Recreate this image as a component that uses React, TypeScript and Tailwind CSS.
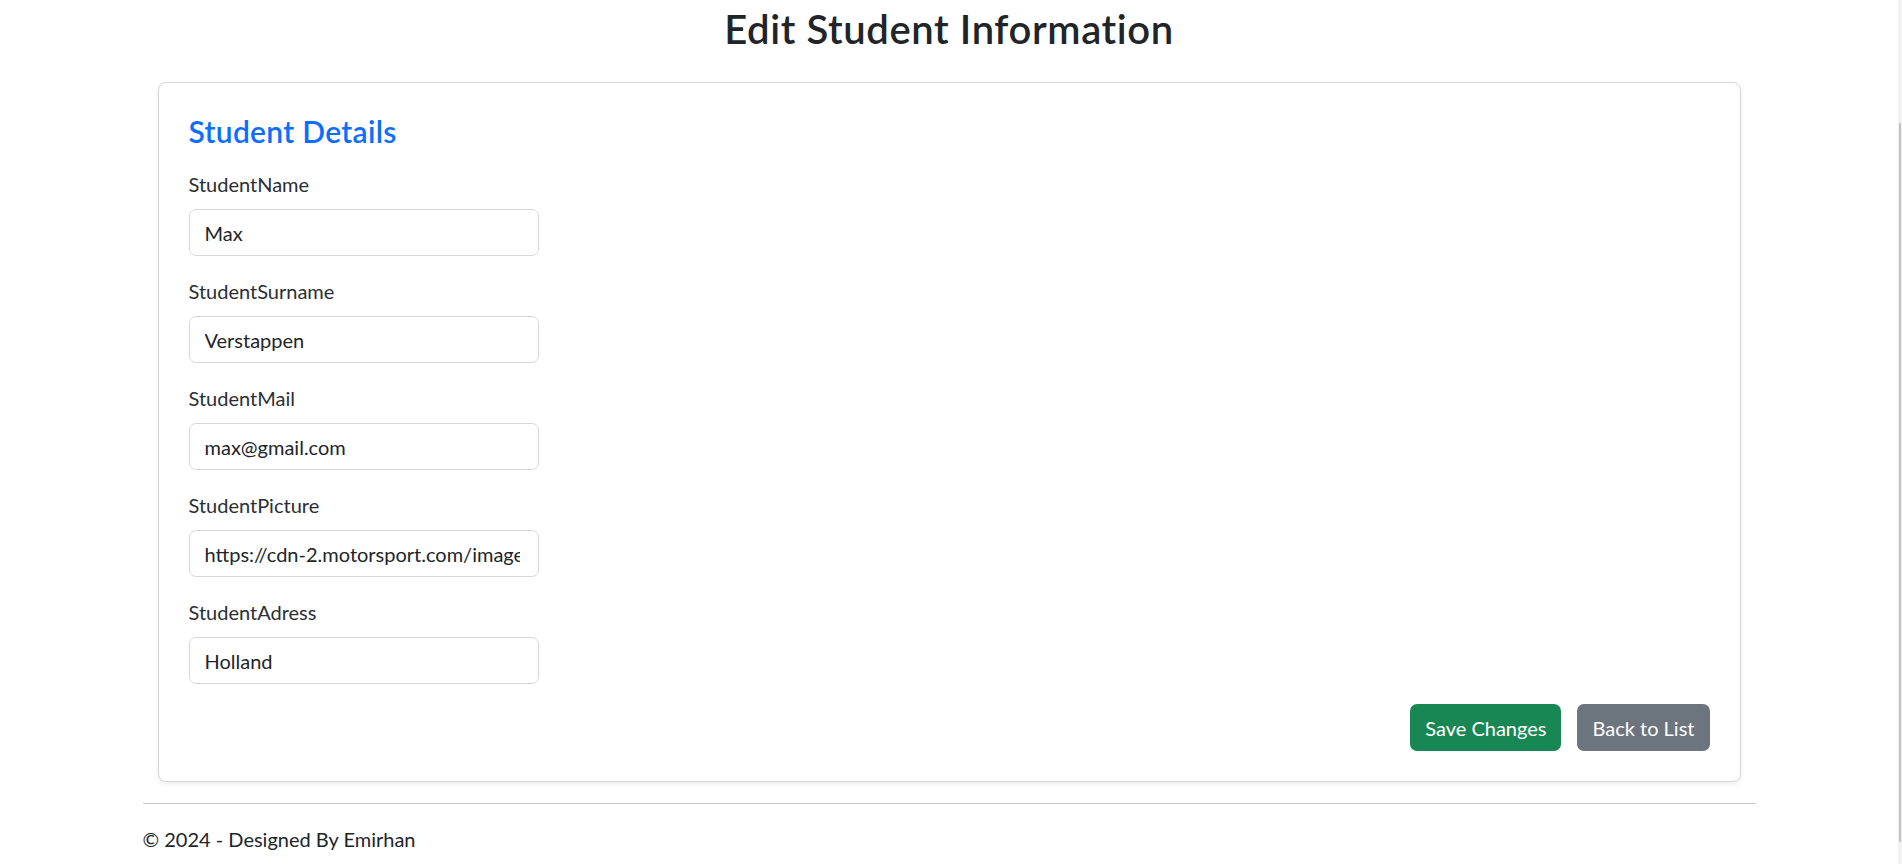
import React from "react";

const fields = [
  { label: "StudentName", value: "Max" },
  { label: "StudentSurname", value: "Verstappen" },
  { label: "StudentMail", value: "max@gmail.com" },
  { label: "StudentPicture", value: "https://cdn-2.motorsport.com/images/amp/2jXZBOm6/s1000/max-verstappen-red-bull-racing.jpg" },
  { label: "StudentAdress", value: "Holland" },
];

export default function App() {
  return (
    <div
      className="flex min-h-screen bg-white text-[#212529]"
      style={{ fontFamily: '"Segoe UI", Lato, "Noto Sans", sans-serif' }}
    >
      <div className="flex-1">
        <div className="w-[1613px] mx-auto">
          <h1 className="text-center text-[40px] leading-[48px] font-semibold tracking-[0.6px] pt-[5px] mb-[29px]">
            Edit Student Information
          </h1>
          <div className="px-[15px]">
            <div className="border border-[#d6d6d6] rounded-[8px] shadow-[0_2px_5px_rgba(0,0,0,0.08)] p-[30px] bg-white">
              <h4 className="text-[30px] leading-[36px] font-semibold tracking-[0.3px] text-[#0d6efd] mb-[20px]">
                Student Details
              </h4>
              {fields.map((f) => (
                <div key={f.label} className="mb-[20px]">
                  <label className="block text-[20px] leading-[30px] mb-[10px] text-[#2b2f33]">{f.label}</label>
                  <input
                    readOnly
                    value={f.value}
                    className="block w-[350px] h-[47px] pl-[15px] pr-[18px] text-[20px] text-[#212529] border border-[#d6d8db] rounded-[7px] bg-white outline-none"
                    style={{ fontFamily: '"Segoe UI", Lato, "Noto Sans", sans-serif' }}
                  />
                </div>
              ))}
              <div className="flex justify-end gap-[16px]">
                <button className="h-[47px] px-[15px] text-[20px] text-white bg-[#198754] rounded-[7px]">
                  Save Changes
                </button>
                <button className="h-[47px] px-[15px] text-[20px] text-white bg-[#6c757d] rounded-[7px]">
                  Back to List
                </button>
              </div>
            </div>
          </div>
          <div className="mt-[21px] border-t border-[#c8c9ca]"></div>
          <footer className="pt-[20px] text-[20px] leading-[30px]">© 2024 - Designed By Emirhan</footer>
        </div>
      </div>
      <div className="w-[4px] bg-[#f1f1f1] flex flex-col items-end pt-[123px]">
        <div className="w-[2px] h-[719px] bg-[#c2c2c2] rounded-full mr-[1px]"></div>
      </div>
    </div>
  );
}
